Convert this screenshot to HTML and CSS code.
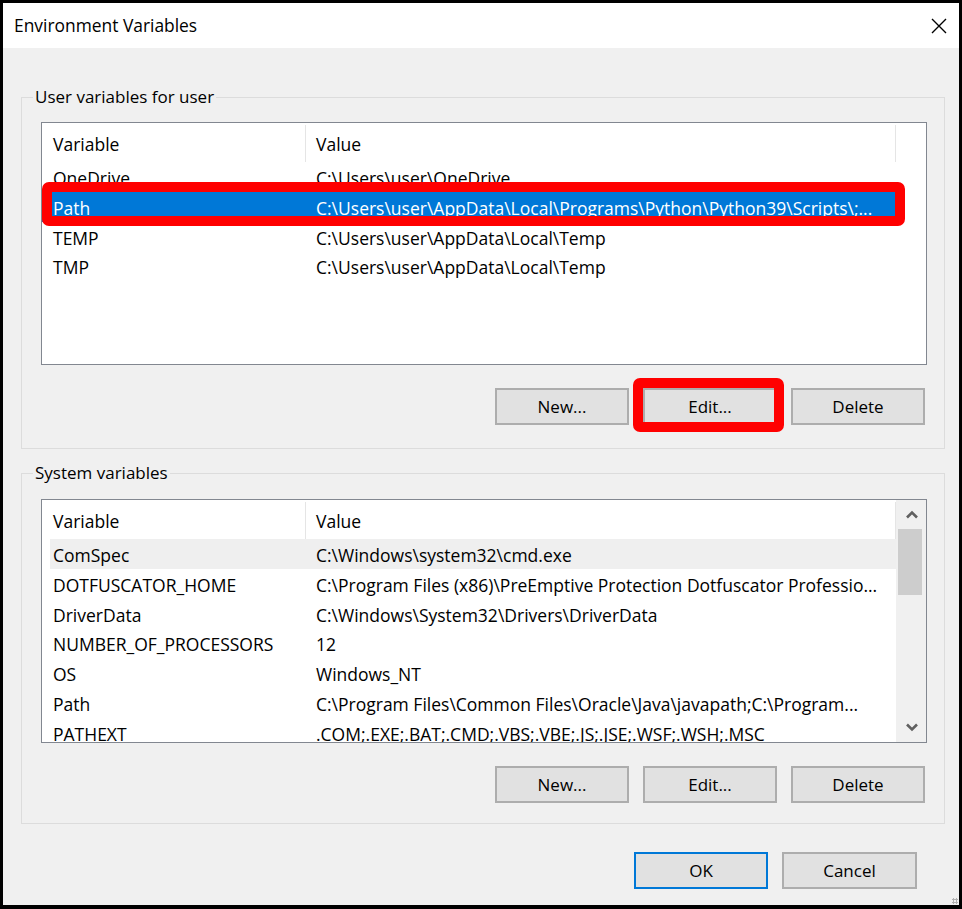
FILE: index.html
```html
<!DOCTYPE html>
<html lang="en">
<head>
    <meta charset="UTF-8">
    <title>Environment Variables</title>
    <link rel="stylesheet" href="styles.css">
</head>
<body>

<div class="window">
    <div class="titlebar">
        <span class="title">Environment Variables</span>
        <svg class="close" width="16" height="16" viewBox="0 0 16 16">
            <path d="M1 1 L15 15 M15 1 L1 15" stroke="#000" stroke-width="1.4" fill="none"/>
        </svg>
    </div>

    <fieldset class="group group-user">
        <legend>User variables for user</legend>
        <div class="list">
            <div class="table">
                <div class="head">
                    <div class="hcell c1">Variable</div>
                    <div class="hcell c2">Value</div>
                </div>
                <div class="row"><div class="c1">OneDrive</div><div class="c2">C:\Users\user\OneDrive</div></div>
                <div class="row selected">
                    <div class="c1">Path</div><div class="c2">C:\Users\user\AppData\Local\Programs\Python\Python39\Scripts\;...</div>
                    <div class="mark mark-row"></div>
                </div>
                <div class="row"><div class="c1">TEMP</div><div class="c2">C:\Users\user\AppData\Local\Temp</div></div>
                <div class="row"><div class="c1">TMP</div><div class="c2">C:\Users\user\AppData\Local\Temp</div></div>
            </div>
        </div>
        <div class="buttons">
            <button class="btn">New...</button>
            <button class="btn">Edit...<span class="mark mark-btn"></span></button>
            <button class="btn">Delete</button>
        </div>
    </fieldset>

    <fieldset class="group group-system">
        <legend>System variables</legend>
        <div class="list">
            <div class="table">
                <div class="head">
                    <div class="hcell c1">Variable</div>
                    <div class="hcell c2">Value</div>
                </div>
                <div class="row dim"><div class="c1">ComSpec</div><div class="c2">C:\Windows\system32\cmd.exe</div></div>
                <div class="row"><div class="c1">DOTFUSCATOR_HOME</div><div class="c2">C:\Program Files (x86)\PreEmptive Protection Dotfuscator Professio...</div></div>
                <div class="row"><div class="c1">DriverData</div><div class="c2">C:\Windows\System32\Drivers\DriverData</div></div>
                <div class="row"><div class="c1">NUMBER_OF_PROCESSORS</div><div class="c2">12</div></div>
                <div class="row"><div class="c1">OS</div><div class="c2">Windows_NT</div></div>
                <div class="row"><div class="c1">Path</div><div class="c2">C:\Program Files\Common Files\Oracle\Java\javapath;C:\Program...</div></div>
                <div class="row"><div class="c1">PATHEXT</div><div class="c2">.COM;.EXE;.BAT;.CMD;.VBS;.VBE;.JS;.JSE;.WSF;.WSH;.MSC</div></div>
            </div>
            <div class="scrollbar">
                <div class="arrow">
                    <svg width="12" height="9" viewBox="0 0 12 9"><path d="M1 7.5 L6 2.5 L11 7.5" stroke="#606060" stroke-width="2.6" fill="none"/></svg>
                </div>
                <div class="track"><div class="thumb"></div></div>
                <div class="arrow">
                    <svg width="12" height="9" viewBox="0 0 12 9"><path d="M1 1.5 L6 6.5 L11 1.5" stroke="#606060" stroke-width="2.6" fill="none"/></svg>
                </div>
            </div>
        </div>
        <div class="buttons">
            <button class="btn">New...</button>
            <button class="btn">Edit...</button>
            <button class="btn">Delete</button>
        </div>
    </fieldset>

    <div class="footer">
        <button class="btn btn-default">OK</button>
        <button class="btn btn-cancel">Cancel</button>
    </div>

    <div class="grip"></div>
</div>

</body>
</html>
```

FILE: styles.css
```css
* {
    box-sizing: border-box;
}
body {
    margin: 0;
    font-family: "Segoe UI", "Open Sans", "Noto Sans", sans-serif;
    font-size: 17px;
    color: #000;
}
.window {
    position: relative;
    width: 962px;
    height: 909px;
    border: 3px solid #000;
    border-bottom-width: 4px;
    background-color: #f0f0f0;
}
.titlebar {
    height: 45px;
    background-color: #fff;
    display: flex;
    align-items: center;
    justify-content: space-between;
    padding: 0 12px 0 11px;
}
.title {
    font-size: 17.4px;
    margin-top: -2px;
}
.close {
    display: block;
}
.group {
    width: 924px;
    margin: 39px 0 0 18px;
    padding: 15px 17px 23px 19px;
    border: 1px solid #dcdcdc;
}
.group legend {
    margin-left: -8px;
    padding: 0 2px;
    line-height: 20px;
}
.group-system {
    margin-top: 14px;
    padding-top: 16px;
    padding-bottom: 20px;
}
.list {
    display: flex;
    height: 243px;
    border: 1px solid #828790;
    background-color: #fff;
    overflow: hidden;
    font-size: 17.5px;
}
.group-system .list {
    height: 244px;
}
.table {
    width: 854px;
}
.head {
    display: flex;
    padding-top: 2px;
}
.hcell {
    height: 37px;
    line-height: 38px;
    border-right: 1px solid #e5e5e5;
}
.c1 {
    width: 264px;
    padding-left: 11px;
    flex-shrink: 0;
}
.c2 {
    width: 590px;
    padding-left: 10px;
    white-space: nowrap;
    overflow: hidden;
}
.hcell.c1 {
    width: 264px;
}
.hcell.c2 {
    width: 591px;
}
.row {
    position: relative;
    display: flex;
    height: 29.8px;
    white-space: nowrap;
}
.row .c1,
.row .c2 {
    line-height: 33.6px;
    height: 29.8px;
}
.row.selected {
    background-color: #0078d7;
    color: #fff;
}
.row.dim {
    background: linear-gradient(to right, #fff 8px, #efefef 8px);
}
.scrollbar {
    width: 30px;
    display: flex;
    flex-direction: column;
    background-color: #f0f0f0;
}
.arrow {
    height: 29px;
    display: flex;
    align-items: center;
    justify-content: center;
    padding-left: 1px;
}
.arrow svg {
    display: block;
}
.track {
    flex: 1;
    padding: 0 4px 0 2px;
}
.thumb {
    height: 66px;
    background-color: #cdcdcd;
}
.buttons {
    display: flex;
    justify-content: flex-end;
    gap: 14px;
    margin-top: 23px;
    padding-right: 2px;
}
.btn {
    position: relative;
    width: 134px;
    height: 37px;
    background-color: #e1e1e1;
    border: 2px solid #adadad;
    font-family: inherit;
    font-size: 17px;
    color: #000;
    padding: 0;
}
.btn-default {
    border-color: #0078d7;
}
.btn-cancel {
    width: 135px;
}
.footer {
    display: flex;
    justify-content: flex-end;
    gap: 14px;
    margin-top: 28px;
    padding-right: 42px;
}
.mark {
    position: absolute;
    border: 10px solid #ff0000;
    border-radius: 7px;
    pointer-events: none;
}
.mark-row {
    left: 0;
    top: -10px;
    width: 863px;
    height: 44px;
}
.mark-btn {
    left: -12px;
    top: -12px;
    width: 151px;
    height: 54px;
}
.grip {
    position: absolute;
    right: 1px;
    bottom: 1px;
    width: 6px;
    height: 6px;
    background-image: radial-gradient(circle, #b0b0b0 1px, transparent 1.2px);
    background-size: 3px 3px;
}
```
